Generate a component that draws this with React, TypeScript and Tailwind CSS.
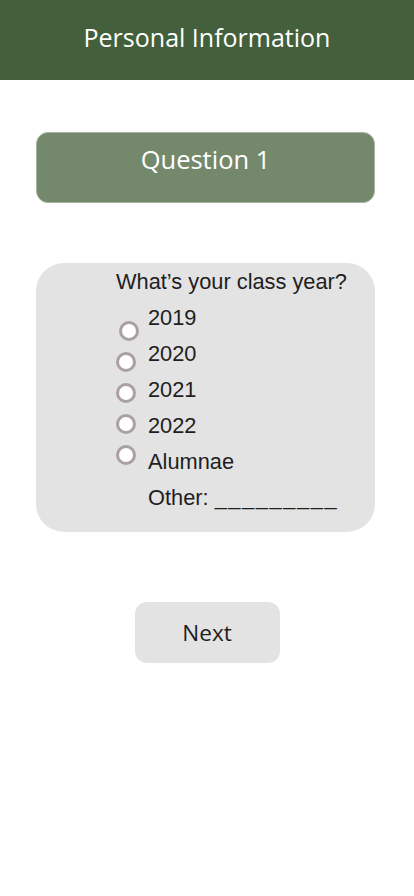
const YEARS: { label: string; radio: string; text?: string }[] = [
  { label: '2019', radio: 'translate-x-[3px] translate-y-[13px]' },
  { label: '2020', radio: 'translate-y-[8px]' },
  { label: '2021', radio: 'translate-y-[3px]' },
  { label: '2022', radio: '-translate-y-[2px]' },
  { label: 'Alumnae', radio: '-translate-y-[7px]', text: 'ml-[1px]' },
]

function Radio({ className }: { className: string }) {
  return <span className={`block h-5 w-5 shrink-0 rounded-full border-[3px] border-[#aaa0a0] bg-white ${className}`} />
}

export default function App() {
  return (
    <div className="min-h-[896px] w-full bg-white">
      <header className="flex h-20 items-center justify-center bg-[#435f3b] pb-1 font-['Open_Sans',sans-serif] text-[25px] text-white">
        Personal Information
      </header>

      <div className="ml-9 mr-[39px] mt-[52px] flex h-[71px] justify-center rounded-xl border border-[#a7b3a2] bg-[#74896c] pt-[8px] font-['Open_Sans',sans-serif] text-[25.5px] leading-[36px] text-white">
        Question 1
      </div>

      <section className="ml-9 mr-[39px] mt-[60px] rounded-[28px] bg-[#e3e3e3] pb-4 pl-20 pt-px font-['Liberation_Sans',Arial,sans-serif] text-[21.8px] leading-[36px] text-[#1e1e1e]">
        <div>What’s your class year?</div>
        {YEARS.map((y) => (
          <div key={y.label} className="flex h-9 items-center">
            <Radio className={y.radio} />
            <span className={`ml-[12px] ${y.text ?? ''}`}>{y.label}</span>
          </div>
        ))}
        <div className="pl-8">
          Other: <span className="tracking-[1.6px]">_________</span>
        </div>
      </section>

      <div className="mt-[70px] flex justify-center">
        <button className="h-[61px] w-[145px] rounded-xl bg-[#e3e3e3] font-['Open_Sans',sans-serif] text-[22.5px] text-[#1e1e1e]">
          Next
        </button>
      </div>
    </div>
  )
}
